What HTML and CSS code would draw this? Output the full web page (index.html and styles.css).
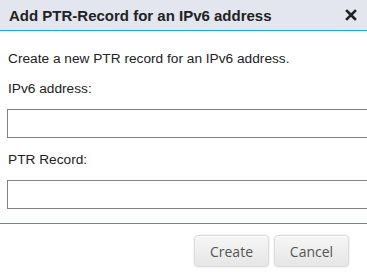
FILE: index.html
```html
<!DOCTYPE html>
<html lang="en">
<head>
    <meta charset="UTF-8">
    <title>Add PTR-Record</title>
    <link rel="stylesheet" href="styles.css">
</head>
<body>
    <div class="dialog">
        <div class="dialog-head">
            <span class="dialog-title">Add PTR-Record for an IPv6 address</span>
            <span class="dialog-close">
                <svg width="12" height="12" viewBox="0 0 12 12">
                    <path d="M2 2 L10 10 M10 2 L2 10" stroke="#222" stroke-width="2.6" stroke-linecap="square"/>
                </svg>
            </span>
        </div>
        <div class="dialog-body">
            <p class="intro">Create a new PTR record for an IPv6 address.</p>
            <label class="field-label">IPv6 address:</label>
            <input type="text" class="field-input">
            <label class="field-label">PTR Record:</label>
            <input type="text" class="field-input">
        </div>
        <div class="dialog-foot">
            <button class="btn">Create</button>
            <button class="btn">Cancel</button>
        </div>
    </div>
</body>
</html>
```

FILE: styles.css
```css
*{
    margin: 0;
    padding: 0;
    box-sizing: border-box;
}
body{
    background: #fff;
    font-family: "Liberation Sans", Arial, sans-serif;
    overflow: hidden;
}
.dialog{
    width: 367px;
    height: 277px;
    overflow: hidden;
}
.dialog-head{
    height: 31px;
    background-color: #e3e6ee;
    border-bottom: 1px solid #13a7e7;
    display: flex;
    align-items: center;
    justify-content: space-between;
    padding: 0 10px 0 9px;
}
.dialog-title{
    font-weight: bold;
    font-size: 15px;
    color: #222;
}
.dialog-close{
    display: flex;
    width: 13px;
    height: 13px;
    align-items: center;
    justify-content: center;
}
.dialog-body{
    padding: 20px 0 0 7px;
    font-size: 13.7px;
    color: #222;
    overflow: hidden;
}
.intro{
    padding-left: 1px;
    height: 30px;
}
.field-label{
    display: block;
    padding-left: 1px;
    height: 28px;
}
.field-input{
    display: block;
    width: 360px;
    height: 29px;
    border: 1px solid #808080;
    border-right: none;
    margin-bottom: 14px;
    outline: none;
    font: inherit;
}
.dialog-foot{
    border-top: 1px solid #2a9ad6;
    display: flex;
    justify-content: flex-end;
    gap: 5px;
    padding: 11px 18px 0 0;
}
.btn{
    width: 75px;
    height: 32px;
    font-family: "Open Sans", sans-serif;
    font-size: 14px;
    color: #555;
    background: linear-gradient(#f6f6f6, #e6e6e6);
    border: 1px solid #dcdcdc;
    border-radius: 4px;
    box-shadow: 0 0 2px rgba(0,0,0,0.15), inset 0 1px 0 #fff;
}
```
